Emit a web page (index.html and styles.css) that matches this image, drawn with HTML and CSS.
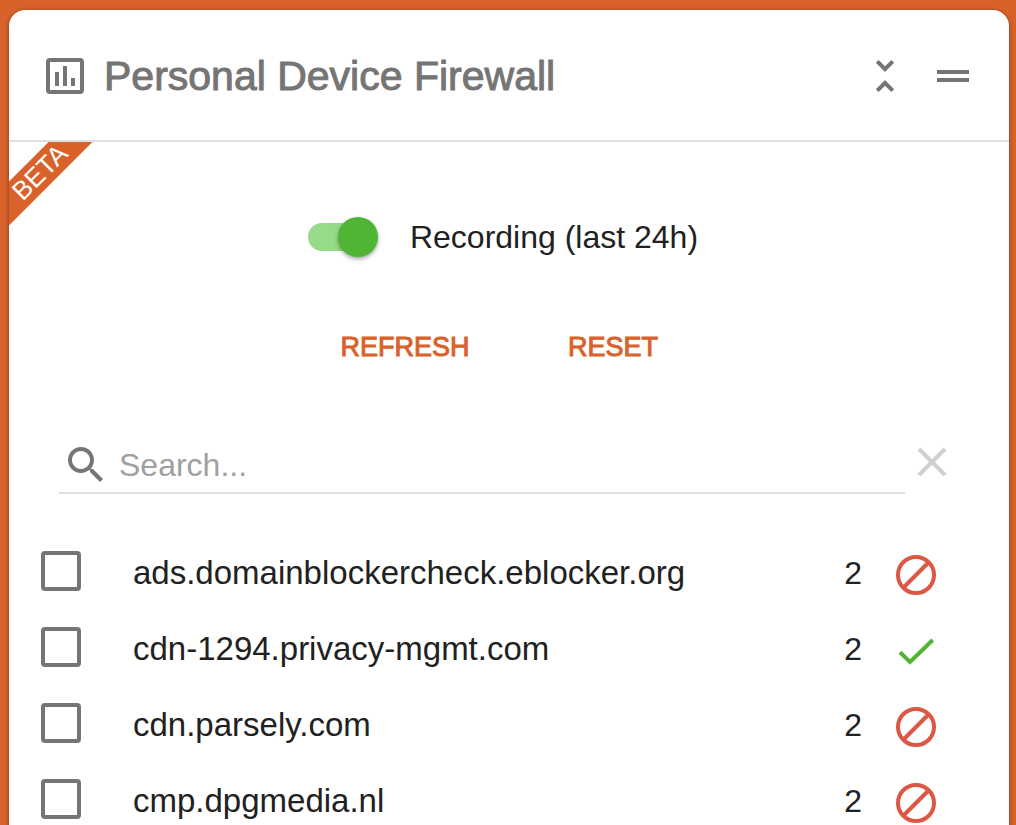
FILE: index.html
```html
<!DOCTYPE html>
<html lang="en">
<head>
    <meta charset="UTF-8">
    <meta name="viewport" content="width=device-width, initial-scale=1.0">
    <title>Personal Device Firewall</title>
    <link rel="stylesheet" href="styles.css">
</head>
<body>
    <main class="card">
        <header class="card-header">
            <svg class="chart-icon" width="38" height="36" viewBox="0 0 38 36" aria-hidden="true">
                <rect x="2" y="2" width="34" height="32" rx="2" fill="none" stroke="currentColor" stroke-width="4"/>
                <path d="M9 14h4v14H9zM17 8h4v20h-4zM25 20h4v8h-4z" fill="currentColor"/>
            </svg>
            <h1>Personal Device Firewall</h1>
            <button type="button" class="icon-button" aria-label="Collapse">
                <svg width="48" height="48" viewBox="0 0 24 24"><path d="M7.41 18.59L8.83 20 12 16.83 15.17 20l1.41-1.41L12 14l-4.59 4.59zm9.18-13.18L15.17 4 12 7.17 8.83 4 7.41 5.41 12 10l4.59-4.59z"/></svg>
            </button>
            <button type="button" class="icon-button" aria-label="Move">
                <svg width="48" height="48" viewBox="0 0 24 24"><path d="M20 9H4v2h16V9zM4 15h16v-2H4v2z"/></svg>
            </button>
        </header>

        <div class="card-content">
            <div class="ribbon"><span>BETA</span></div>

            <div class="recording">
                <input type="checkbox" class="switch" id="recording" checked>
                <label for="recording">Recording (last 24h)</label>
            </div>

            <div class="actions">
                <button type="button">REFRESH</button>
                <button type="button">RESET</button>
            </div>

            <form class="search">
                <div class="search-field">
                    <svg width="48" height="48" viewBox="0 0 24 24" aria-hidden="true"><path d="M15.5 14h-.79l-.28-.27C15.41 12.59 16 11.11 16 9.5 16 5.91 13.09 3 9.5 3S3 5.91 3 9.5 5.91 16 9.5 16c1.61 0 3.09-.59 4.23-1.57l.27.28v.79l5 4.99L20.49 19l-4.99-5zm-6 0C7.01 14 5 11.99 5 9.5S7.01 5 9.5 5 14 7.01 14 9.5 11.99 14 9.5 14z"/></svg>
                    <input type="text" placeholder="Search..." aria-label="Search">
                </div>
                <button type="reset" class="icon-button clear" aria-label="Clear search">
                    <svg width="48" height="48" viewBox="0 0 48 48"><path d="M11 11l26 26M37 11L11 37" fill="none" stroke="currentColor" stroke-width="4"/></svg>
                </button>
            </form>

            <ul class="domains">
                <li>
                    <input type="checkbox" id="domain1">
                    <label for="domain1">ads.domainblockercheck.eblocker.org</label>
                    <span class="count">2</span>
                    <svg class="status blocked" width="40" height="40" viewBox="0 0 40 40"><circle cx="20" cy="20" r="18"/><path d="M7.5 32.5l25-25"/></svg>
                </li>
                <li>
                    <input type="checkbox" id="domain2">
                    <label for="domain2">cdn-1294.privacy-mgmt.com</label>
                    <span class="count">2</span>
                    <svg class="status allowed" width="40" height="40" viewBox="0 0 40 40"><path d="M4 21.3l10 9.7L36.7 9"/></svg>
                </li>
                <li>
                    <input type="checkbox" id="domain3">
                    <label for="domain3">cdn.parsely.com</label>
                    <span class="count">2</span>
                    <svg class="status blocked" width="40" height="40" viewBox="0 0 40 40"><circle cx="20" cy="20" r="18"/><path d="M7.5 32.5l25-25"/></svg>
                </li>
                <li>
                    <input type="checkbox" id="domain4">
                    <label for="domain4">cmp.dpgmedia.nl</label>
                    <span class="count">2</span>
                    <svg class="status blocked" width="40" height="40" viewBox="0 0 40 40"><circle cx="20" cy="20" r="18"/><path d="M7.5 32.5l25-25"/></svg>
                </li>
            </ul>
        </div>
    </main>
</body>
</html>
```
FILE: styles.css
```css
* {
    margin: 0;
    padding: 0;
    box-sizing: border-box;
    font-family: "Liberation Sans", Arial, sans-serif;
}

html {
    scrollbar-width: none;
}

body {
    padding: 10px 7px 0 9px;
    background: #d9622b;
    color: #212121;
    font-size: 32px;
    line-height: 40px;
}

button {
    border: none;
    background: none;
    cursor: pointer;
}

svg {
    display: block;
    flex-shrink: 0;
    fill: currentColor;
}

.card {
    background: #fff;
    border-radius: 16px 16px 0 0;
    box-shadow: 0 1px 5px rgba(0, 0, 0, 0.4);
}

.card-header {
    display: flex;
    align-items: center;
    padding: 42px 32px 40px 37px;
    border-bottom: 2px solid #e0e0e0;
    color: #757575;
}

.card-header h1 {
    flex: 1;
    margin-left: 20px;
    font-size: 41px;
    font-weight: normal;
    line-height: 48px;
    -webkit-text-stroke: 1px currentColor;
}

.icon-button {
    color: #757575;
}

.icon-button + .icon-button {
    margin-left: 20px;
}

.card-content {
    position: relative;
    padding-top: 72px;
}

/* corner ribbon */
.ribbon {
    position: absolute;
    top: 0;
    left: 0;
    width: 84px;
    height: 84px;
    clip-path: inset(0);
}

.ribbon span {
    position: absolute;
    top: 15px;
    left: -49px;
    width: 160px;
    background: #d9622b;
    color: #fff;
    font-size: 26px;
    line-height: 31px;
    text-align: center;
    transform: rotate(-45deg);
}

.recording {
    display: flex;
    justify-content: center;
    align-items: center;
    gap: 32px;
    height: 46px;
    padding-right: 12px;
}

.switch {
    appearance: none;
    position: relative;
    width: 70px;
    height: 40px;
    cursor: pointer;
}

.switch::before {
    content: "";
    position: absolute;
    top: 6px;
    left: 0;
    width: 64px;
    height: 28px;
    border-radius: 14px;
    background: #bdbdbd;
}

.switch::after {
    content: "";
    position: absolute;
    top: 0;
    left: 0;
    width: 40px;
    height: 40px;
    border-radius: 50%;
    background: #fafafa;
    box-shadow: 0 2px 4px rgba(0, 0, 0, 0.35);
}

.switch:checked::before {
    background: #97db89;
}

.switch:checked::after {
    left: 30px;
    background: #50b534;
}

.actions {
    display: flex;
    justify-content: center;
    gap: 32px;
    margin-top: 51px;
}

.actions button {
    min-width: 176px;
    color: #d9622b;
    font-size: 27px;
    line-height: 72px;
    -webkit-text-stroke: 1px currentColor;
}

.search {
    display: flex;
    align-items: flex-start;
    gap: 3px;
    margin-top: 55px;
    padding: 0 53px 0 50px;
}

.search-field {
    display: flex;
    flex: 1;
    align-items: center;
    gap: 9px;
    height: 56px;
    padding-left: 3px;
    border-bottom: 2px solid #e0e0e0;
    color: #757575;
}

.search-field input {
    flex: 1;
    min-width: 0;
    border: none;
    outline: none;
    background: none;
    color: #212121;
    font-size: 32px;
}

.search-field input::placeholder {
    color: #a0a0a0;
}

.clear {
    color: #d0d0d0;
}

.domains {
    margin-top: 41px;
    list-style: none;
}

.domains li {
    display: flex;
    align-items: center;
    height: 76px;
    padding: 0 73px 0 32px;
}

.domains input {
    appearance: none;
    width: 40px;
    height: 40px;
    margin-bottom: 4px;
    border: 4px solid #757575;
    border-radius: 4px;
}

.domains input:checked {
    background: #757575;
}

.domains label {
    flex: 1;
    margin-left: 52px;
    font-size: 33px;
}

.status {
    margin-top: 4px;
    margin-left: 34px;
    fill: none;
    stroke: currentColor;
    stroke-width: 4;
}

.blocked {
    color: #db5844;
}

.allowed {
    color: #50b534;
}
```
